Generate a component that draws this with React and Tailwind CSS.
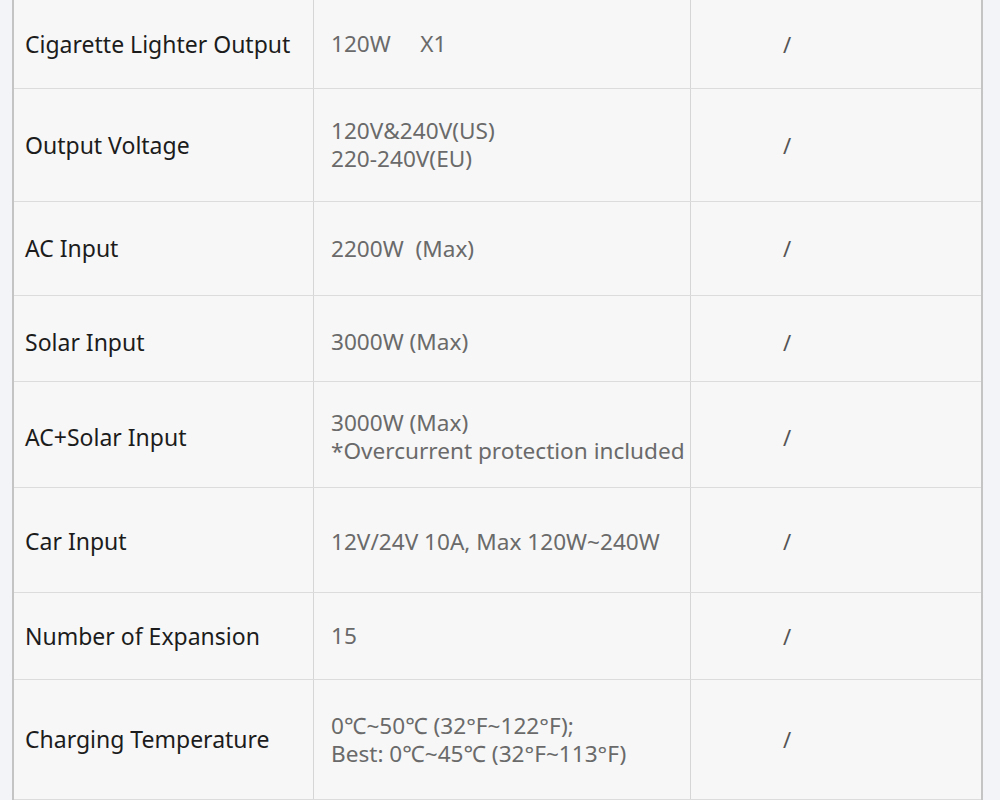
import React from 'react';

const ROWS = [
  { label: 'Cigarette Lighter Output', value: ['120W\u00a0\u00a0\u00a0\u00a0\u00a0X1'], h: 'h-[89px]', pad: '' },
  { label: 'Output Voltage', value: ['120V&240V(US)', '220-240V(EU)'], h: 'h-[113px]', pad: '' },
  { label: 'AC Input', value: ['2200W\u00a0\u00a0(Max)'], h: 'h-[94px]', pad: '' },
  { label: 'Solar Input', value: ['3000W (Max)'], h: 'h-[86px]', pad: 'pt-[7px]' },
  { label: 'AC+Solar Input', value: ['3000W (Max)', '*Overcurrent protection included'], h: 'h-[106px]', pad: 'pt-[5px]' },
  { label: 'Car Input', value: ['12V/24V 10A, Max 120W~240W'], h: 'h-[105px]', pad: 'pt-[3px]' },
  { label: 'Number of Expansion', value: ['15'], h: 'h-[87px]', pad: '' },
  { label: 'Charging Temperature', value: ['0℃~50℃ (32°F~122°F);', 'Best: 0℃~45℃ (32°F~113°F)'], h: 'h-[120px]', pad: '' },
];

function Row({ label, value, h, pad }) {
  return (
    <div className={`grid grid-cols-[300px_377px_1fr] border-b border-[#dcdcdc] ${h}`}>
      <div className={`flex items-center border-r border-[#d6d6d6] pl-[11px] text-[23px] text-[#1c1c1c] ${pad}`}>
        {label}
      </div>
      <div
        className={`flex flex-col justify-center border-r border-[#d6d6d6] pl-[17px] text-[22.6px] leading-[28px] text-[#6a6a6a] ${pad}`}
      >
        {value.map((line, i) => (
          <div key={i}>{line}</div>
        ))}
      </div>
      <div className={`flex items-center pl-[92px] text-[22px] text-[#555] ${pad}`}>/</div>
    </div>
  );
}

export default function App() {
  return (
    <div
      className="h-[800px] w-[1000px] overflow-hidden bg-[#f3f4f8] pl-[12px]"
      style={{ fontFamily: '"Noto Sans", "Open Sans", sans-serif' }}
    >
      <div className="w-[971px] border-x-2 border-[#c4c4c4] bg-[#f7f7f7]">
        {ROWS.map((r) => (
          <Row key={r.label} {...r} />
        ))}
      </div>
    </div>
  );
}
